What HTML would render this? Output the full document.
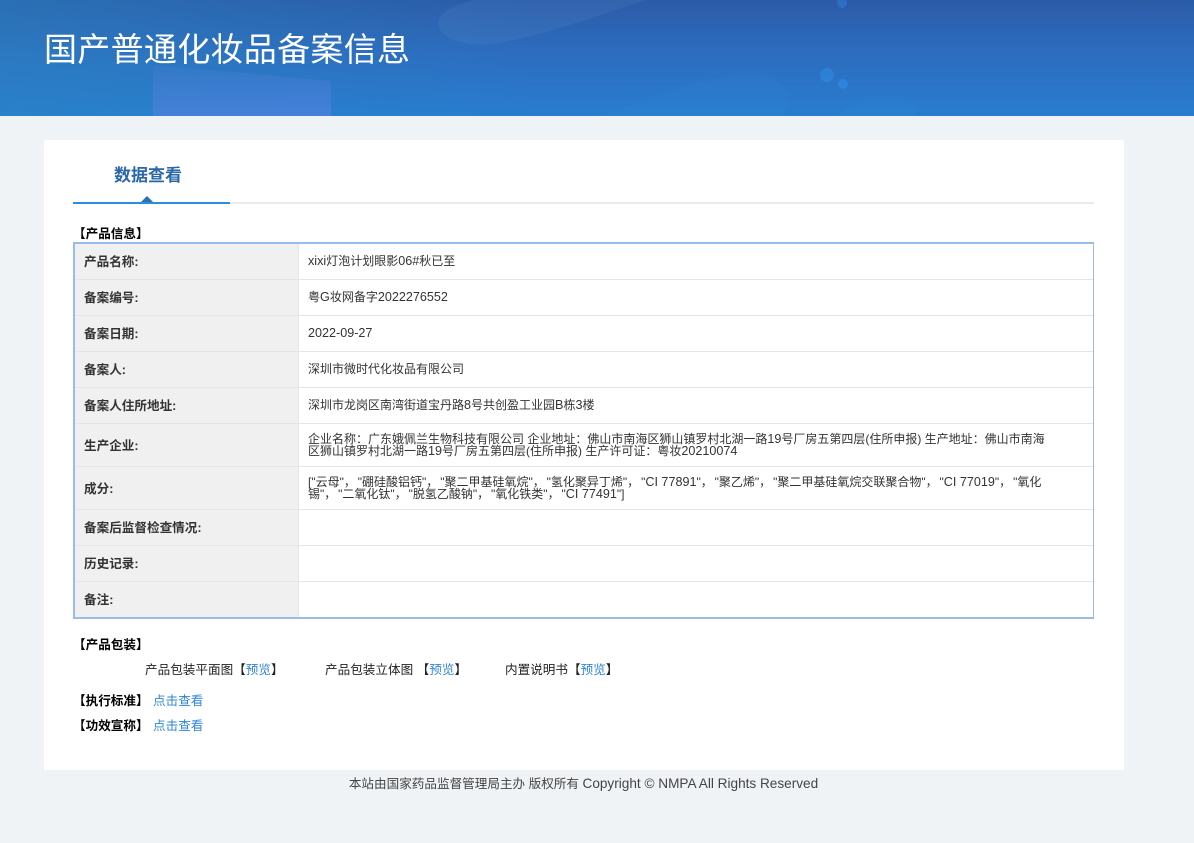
<!DOCTYPE html>
<html lang="zh-CN">
<head>
<meta charset="utf-8">
<title>国产普通化妆品备案信息</title>
<style>
*{box-sizing:border-box}
html,body{margin:0;padding:0}
body{width:1194px;height:843px;overflow:hidden;position:relative;background:#f0f3f6;font-family:"Liberation Sans","Noto Sans CJK SC",sans-serif;font-size:12px;color:#333}
.hd{position:absolute;left:0;top:0;width:1194px;height:116px;overflow:hidden;background:linear-gradient(90deg,rgba(42,135,195,.45) 0%,rgba(42,135,195,0) 45%),linear-gradient(180deg,#2b5ba7 0%,#2d6cbf 45%,#287dd0 100%)}
.hd svg{position:absolute;left:0;top:0}
.hd h1{position:absolute;left:44px;top:25px;margin:0;font-size:33px;line-height:50px;font-weight:400;color:#fff;letter-spacing:.3px;white-space:nowrap}
.card{position:absolute;left:44px;top:140px;width:1080px;height:630px;background:#fff}
.tab{position:absolute;left:114px;top:165px;font-size:17px;line-height:22px;font-weight:700;color:#2a67a8}
.ln{position:absolute;left:73px;top:202px;width:1021px;height:2px;background:#e9ebee}
.ln2{position:absolute;left:73px;top:202px;width:157px;height:2px;background:#2b8de0}
.tri{position:absolute;left:141px;top:196px;width:0;height:0;border-left:6px solid transparent;border-right:6px solid transparent;border-bottom:6px solid #2a72b8}
.lab{position:absolute;font-size:12.6px;line-height:16px;font-weight:700;color:#000;white-space:nowrap}
.txt{position:absolute;font-size:12.6px;line-height:16px;color:#222;white-space:nowrap}
a{color:#2f86d8;text-decoration:none}
.tb{position:absolute;left:73px;top:242px;width:1021px;height:377px;border:2px solid #9bbce9;border-width:2px 1px 2px 2px;background:#fff}
.r{position:absolute;left:0;width:1018px;border-bottom:1px solid #e3e5e7}
.r:last-child{border-bottom:0}
.k{position:absolute;left:0;top:0;bottom:0;width:224px;background:#f0f0f0;border-right:1px solid #e3e5e7;font-weight:700;font-size:12.6px;color:#333;display:flex;align-items:center;padding-left:9px;padding-bottom:2px}
.v{position:absolute;left:233px;width:745px;top:0;bottom:0;display:flex;align-items:center;font-size:12px;line-height:12px;color:#333;padding-bottom:2px}
.l{font-size:12.6px}
i{font-style:normal;margin-right:1.9px}
.ft{position:absolute;left:0;width:1167px;top:775px;text-align:center;font-size:12.6px;line-height:18px;color:#444}
.ft span{font-size:13.6px}
</style>
</head>
<body>
<div class="hd">
<svg width="1194" height="116" viewBox="0 0 1194 116">
<defs>
<linearGradient id="g" x1="0" y1="0" x2="0" y2="1"><stop offset="0" stop-color="#4b7fd6" stop-opacity=".25"/><stop offset="1" stop-color="#4f80dc" stop-opacity=".75"/></linearGradient>
</defs>
<path d="M153 116 V65 L331 81 V116Z" fill="url(#g)"/>
<path d="M438 22 C440 8 470 -2 500 -2 L652 -2 C620 8 540 38 490 44 C460 47 437 36 438 22Z" fill="#6a9ad6" opacity=".14"/>
<path d="M600 116 C650 100 700 78 744 73 C780 72 795 90 785 116Z" fill="#3f93d6" opacity=".1"/>
<path d="M838 116 C850 100 880 92 905 98 C920 104 918 112 912 116Z" fill="#3f93d6" opacity=".1"/>
<circle cx="842" cy="3" r="5" fill="#2f7fd8" opacity=".5"/>
<circle cx="827" cy="75" r="7" fill="#2f8ae2" opacity=".6"/>
<circle cx="843" cy="84" r="5" fill="#2f8ae2" opacity=".7"/>
</svg>
<h1>国产普通化妆品备案信息</h1>
</div>

<div class="card"></div>
<div class="tab">数据查看</div>
<div class="ln"></div>
<div class="ln2"></div>
<div class="tri"></div>

<div class="lab" style="left:73px;top:226px">【产品信息】</div>

<div class="tb">
<div class="r" style="top:0;height:36px"><div class="k">产品名称:</div><div class="v"><div><span class="l">xixi</span>灯泡计划眼影<span class="l">06#</span>秋已至</div></div></div>
<div class="r" style="top:36px;height:36px"><div class="k">备案编号:</div><div class="v"><div>粤<span class="l">G</span>妆网备字<span class="l">2022276552</span></div></div></div>
<div class="r" style="top:72px;height:36px"><div class="k">备案日期:</div><div class="v"><div><span class="l">2022-09-27</span></div></div></div>
<div class="r" style="top:108px;height:36px"><div class="k">备案人:</div><div class="v"><div>深圳市微时代化妆品有限公司</div></div></div>
<div class="r" style="top:144px;height:36px"><div class="k">备案人住所地址:</div><div class="v"><div>深圳市龙岗区南湾街道宝丹路<span class="l">8</span>号共创盈工业园<span class="l">B</span>栋<span class="l">3</span>楼</div></div></div>
<div class="r" style="top:180px;height:43px"><div class="k">生产企业:</div><div class="v" style="padding-bottom:0"><div>企业名称：广东娥佩兰生物科技有限公司 企业地址：佛山市南海区狮山镇罗村北湖一路<span class="l">19</span>号厂房五第四层(住所申报) 生产地址：佛山市南海区狮山镇罗村北湖一路<span class="l">19</span>号厂房五第四层(住所申报) 生产许可证：粤妆<span class="l">20210074</span></div></div></div>
<div class="r" style="top:223px;height:43px"><div class="k">成分:</div><div class="v" style="padding-bottom:0"><div>["云母"<i>，</i>"硼硅酸铝钙"<i>，</i>"聚二甲基硅氧烷"<i>，</i>"氢化聚异丁烯"<i>，</i>"<span class="l">CI 77891</span>"<i>，</i>"聚乙烯"<i>，</i>"聚二甲基硅氧烷交联聚合物"<i>，</i>"<span class="l">CI 77019</span>"<i>，</i>"氧化锡"<i>，</i>"二氧化钛"<i>，</i>"脱氢乙酸钠"<i>，</i>"氧化铁类"<i>，</i>"<span class="l">CI 77491</span>"]</div></div></div>
<div class="r" style="top:266px;height:36px"><div class="k">备案后监督检查情况:</div><div class="v"></div></div>
<div class="r" style="top:302px;height:36px"><div class="k">历史记录:</div><div class="v"></div></div>
<div class="r" style="top:338px;height:35px"><div class="k">备注:</div><div class="v"></div></div>
</div>

<div class="lab" style="left:73px;top:637px">【产品包装】</div>
<div class="txt" style="left:145px;top:662px">产品包装平面图【<a>预览</a>】</div>
<div class="txt" style="left:325px;top:662px">产品包装立体图 【<a>预览</a>】</div>
<div class="txt" style="left:505px;top:662px">内置说明书【<a>预览</a>】</div>
<div class="lab" style="left:73px;top:693px">【执行标准】</div>
<div class="txt" style="left:153px;top:693px"><a>点击查看</a></div>
<div class="lab" style="left:73px;top:718px">【功效宣称】</div>
<div class="txt" style="left:153px;top:718px"><a>点击查看</a></div>

<div class="ft">本站由国家药品监督管理局主办 版权所有 <span>Copyright © NMPA All Rights Reserved</span></div>
</body>
</html>
